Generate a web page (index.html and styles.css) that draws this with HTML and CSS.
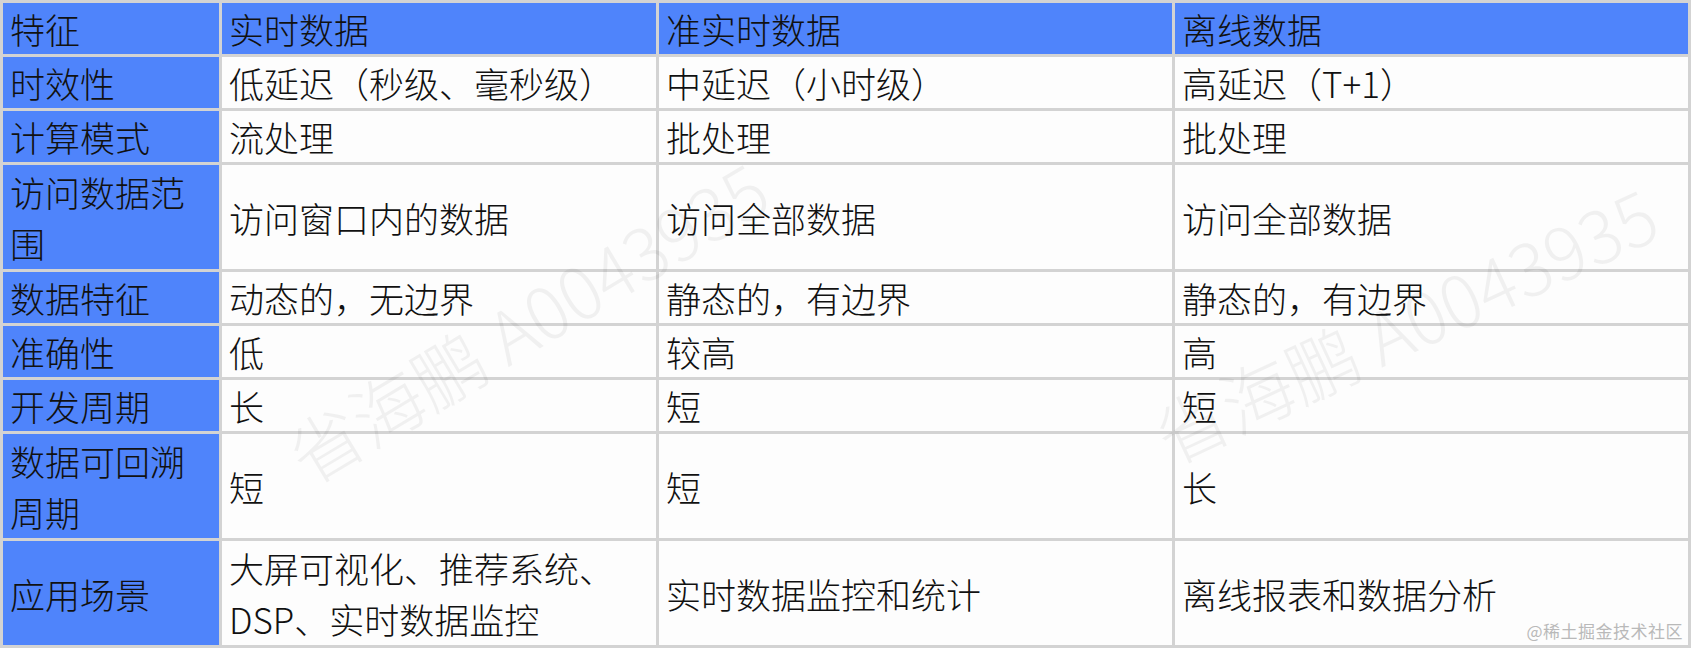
FILE: index.html
```html
<!DOCTYPE html>
<html lang="zh-CN">
<head>
<meta charset="utf-8">
<title>实时数据 / 准实时数据 / 离线数据</title>
<link rel="stylesheet" href="styles.css">
</head>
<body>
<div class="page">
  <table class="cmp">
    <colgroup>
      <col class="c1"><col class="c2"><col class="c3"><col class="c4">
    </colgroup>
    <tr class="head one">
      <th>特征</th><th>实时数据</th><th>准实时数据</th><th>离线数据</th>
    </tr>
    <tr class="one">
      <th>时效性</th><td>低延迟（秒级、毫秒级）</td><td>中延迟（小时级）</td><td>高延迟（T+1）</td>
    </tr>
    <tr class="one">
      <th>计算模式</th><td>流处理</td><td>批处理</td><td>批处理</td>
    </tr>
    <tr class="two">
      <th>访问数据范<br>围</th><td>访问窗口内的数据</td><td>访问全部数据</td><td>访问全部数据</td>
    </tr>
    <tr class="one">
      <th>数据特征</th><td>动态的，无边界</td><td>静态的，有边界</td><td>静态的，有边界</td>
    </tr>
    <tr class="one">
      <th>准确性</th><td>低</td><td>较高</td><td>高</td>
    </tr>
    <tr class="one">
      <th>开发周期</th><td>长</td><td>短</td><td>短</td>
    </tr>
    <tr class="two">
      <th>数据可回溯<br>周期</th><td>短</td><td>短</td><td>长</td>
    </tr>
    <tr class="two">
      <th>应用场景</th><td>大屏可视化、推荐系统、<br>DSP、实时数据监控</td><td>实时数据监控和统计</td><td>离线报表和数据分析</td>
    </tr>
  </table>
  <div class="wm wm-a">省海鹏 A0043935</div>
  <div class="wm wm-b">省海鹏 A0043935</div>
  <div class="credit">@稀土掘金技术社区</div>
</div>
</body>
</html>
```
FILE: styles.css
```css
html, body {
  margin: 0;
  padding: 0;
  background: #ffffff;
}

.page {
  position: relative;
  width: 1691px;
  height: 650px;
  overflow: hidden;
}

.cmp {
  width: 1691px;
  table-layout: fixed;
  border-collapse: collapse;
  font-family: "Noto Sans CJK SC", "Noto Sans", sans-serif;
  font-size: 35px;
  font-weight: 300;
  color: #111111;
}

.c1 { width: 219px; }
.c2 { width: 437px; }
.c3 { width: 516px; }
.c4 { width: 516px; }

.cmp th,
.cmp td {
  border: 3px solid #d3d3d3;
  padding: 0 6px 0 7px;
  text-align: left;
  vertical-align: middle;
  font-weight: 300;
  line-height: 51px;
  white-space: nowrap;
  background: #fdfdfd;
}

.cmp th {
  background: #4f84fb;
}

.cmp tr.one { height: 54px; }
.cmp tr.two { height: 107px; }

.wm {
  position: absolute;
  font-family: "Noto Sans CJK SC", sans-serif;
  font-size: 72px;
  font-weight: 300;
  color: rgba(0, 0, 0, 0.05);
  white-space: nowrap;
  pointer-events: none;
  transform-origin: left bottom;
}

.wm-a {
  left: 320px;
  top: 400px;
  transform: rotate(-31deg);
}

.wm-b {
  left: 1180px;
  top: 380px;
  transform: rotate(-25deg);
}

.credit {
  position: absolute;
  right: 8px;
  bottom: 7px;
  font-family: "Noto Sans CJK SC", sans-serif;
  font-size: 17px;
  color: #b9b9b9;
  letter-spacing: 0.5px;
}
```
